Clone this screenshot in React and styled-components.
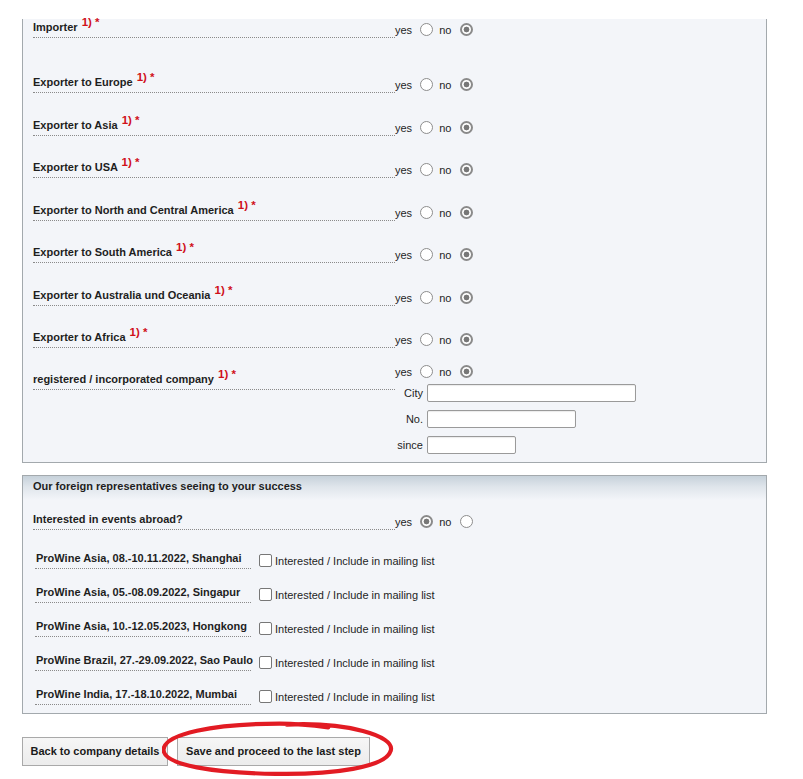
import styled, { createGlobalStyle } from "styled-components";

const GlobalStyle = createGlobalStyle`
  html, body {
    margin: 0;
    padding: 0;
    background: #ffffff;
  }
  body {
    font-family: "Liberation Sans", Arial, sans-serif;
    font-size: 11px;
    color: #1e1e1e;
  }
`;

const Page = styled.div`
  width: 745px;
  padding: 19px 0 0 22px;
`;

const Panel = styled.div`
  background: #f3f5f9;
  border: 1px solid #a3a9ad;
  border-top: ${(p) => (p.$open ? "none" : "1px solid #a3a9ad")};
  padding: ${(p) => (p.$open ? "1px" : "0")} 10px 8px 10px;
  margin-bottom: ${(p) => p.$mb || 0}px;
`;

const PanelHeader = styled.div`
  margin: 0 -10px;
  height: 24px;
  padding: 4px 10px 0;
  box-sizing: border-box;
  line-height: 13px;
  font-weight: bold;
  background: linear-gradient(#c6d1da 0%, #dfe5eb 45%, #f3f5f9 100%);
`;

const Row = styled.div`
  display: flex;
  align-items: ${(p) => (p.$top ? "flex-start" : "flex-end")};
  margin-top: ${(p) => p.$mt ?? 24.5}px;
`;

const Label = styled.div`
  width: 362px;
  box-sizing: border-box;
  line-height: 14px;
  padding-bottom: 3px;
  border-bottom: 1px dotted #8a8a8a;
  font-weight: bold;
  white-space: nowrap;
  margin-top: ${(p) => p.$mt || 0}px;
`;

const Req = styled.span`
  color: #d0101a;
  font-weight: bold;
  font-size: 11.5px;
  vertical-align: 5px;
  line-height: 0;
  margin-left: 1px;
`;

const Choices = styled.div`
  white-space: nowrap;
  line-height: 14px;
  margin-bottom: 1px;
`;

const Radio = styled.input.attrs({ type: "radio" })`
  appearance: none;
  width: 13px;
  height: 13px;
  margin: 3px 3px 0 5px;
  box-sizing: border-box;
  border-radius: 50%;
  border: 1px solid #8d8d8d;
  background: #ffffff;
  vertical-align: -2px;
  &:checked {
    border: 2px solid #8a8a8a;
    background: radial-gradient(circle, #777777 0 2.6px, #ffffff 3.2px);
  }
`;

const Side = styled.div`
  display: flex;
  flex-direction: column;
`;

const Fields = styled.div`
  display: grid;
  grid-template-columns: 28px auto;
  column-gap: 4px;
  row-gap: 8px;
  margin-top: 4px;
  align-items: center;
`;

const FieldLabel = styled.span`
  text-align: right;
  line-height: 14px;
`;

const TextInput = styled.input.attrs({ type: "text" })`
  width: ${(p) => p.$w}px;
  height: 18px;
  box-sizing: border-box;
  border: 1px solid #9a9a9a;
  border-radius: 2px;
  background: #ffffff;
  box-shadow: inset 0 1px 1px rgba(0, 0, 0, 0.08);
  margin: 0;
  padding: 0 3px;
  font: inherit;
`;

const Events = styled.div`
  margin-left: 2px;
  margin-top: 21px;
  display: flex;
  flex-direction: column;
  gap: 16px;
`;

const EventRow = styled.div`
  display: flex;
  align-items: flex-end;
`;

const EventName = styled.div`
  width: 216px;
  box-sizing: border-box;
  padding: 0 0 3px 1px;
  line-height: 14px;
  border-bottom: 1px dotted #8a8a8a;
  font-weight: bold;
  white-space: nowrap;
`;

const Check = styled.label`
  white-space: nowrap;
  line-height: 14px;
  margin-bottom: 1px;
`;

const Box = styled.input.attrs({ type: "checkbox" })`
  appearance: none;
  width: 13px;
  height: 13px;
  margin: 0 3px 0 8px;
  box-sizing: border-box;
  border: 1px solid #777777;
  border-radius: 2px;
  background: #ffffff;
  vertical-align: -2px;
`;

const Actions = styled.div`
  position: relative;
  display: flex;
  gap: 9px;
  margin-top: 23px;
  padding-bottom: 14px;
`;

const Button = styled.button`
  width: ${(p) => p.$w}px;
  height: 29px;
  box-sizing: border-box;
  border: 1px solid #a9a9a9;
  background: linear-gradient(#f6f6f6, #ececec);
  font-family: "Liberation Sans", Arial, sans-serif;
  font-size: 11px;
  font-weight: bold;
  color: #1a1a1a;
  padding: 0;
  cursor: pointer;
`;

const Circle = styled.svg`
  position: absolute;
  left: 140px;
  top: -19px;
  pointer-events: none;
`;

const YesNo = ({ yes }) => (
  <Choices>
    yes <Radio checked={!!yes} readOnly /> no <Radio checked={!yes} readOnly />
  </Choices>
);

const exporters = [
  "Exporter to Europe",
  "Exporter to Asia",
  "Exporter to USA",
  "Exporter to North and Central America",
  "Exporter to South America",
  "Exporter to Australia und Oceania",
  "Exporter to Africa",
];

const events = [
  "ProWine Asia, 08.-10.11.2022, Shanghai",
  "ProWine Asia, 05.-08.09.2022, Singapur",
  "ProWine Asia, 10.-12.05.2023, Hongkong",
  "ProWine Brazil, 27.-29.09.2022, Sao Paulo",
  "ProWine India, 17.-18.10.2022, Mumbai",
];

export default function App() {
  return (
    <>
      <GlobalStyle />
      <Page>
        <Panel $open $mb={12}>
          <Row $mt={0}>
            <Label>
              Importer <Req>1) *</Req>
            </Label>
            <YesNo />
          </Row>
          <Row $mt={37}>
            <Label>
              {exporters[0]} <Req>1) *</Req>
            </Label>
            <YesNo />
          </Row>
          {exporters.slice(1).map((e) => (
            <Row key={e}>
              <Label>
                {e} <Req>1) *</Req>
              </Label>
              <YesNo />
            </Row>
          ))}
          <Row $top $mt={13.5}>
            <Label $mt={10.5}>
              registered / incorporated company <Req>1) *</Req>
            </Label>
            <Side>
              <YesNo />
              <Fields>
                <FieldLabel>City</FieldLabel>
                <TextInput $w={209} />
                <FieldLabel>No.</FieldLabel>
                <TextInput $w={149} />
                <FieldLabel>since</FieldLabel>
                <TextInput $w={89} />
              </Fields>
            </Side>
          </Row>
        </Panel>

        <Panel>
          <PanelHeader>Our foreign representatives seeing to your success</PanelHeader>
          <Row $mt={12}>
            <Label>Interested in events abroad?</Label>
            <YesNo yes />
          </Row>
          <Events>
            {events.map((e) => (
              <EventRow key={e}>
                <EventName>{e}</EventName>
                <Check>
                  <Box />
                  Interested / Include in mailing list
                </Check>
              </EventRow>
            ))}
          </Events>
        </Panel>

        <Actions>
          <Button $w={146}>Back to company details</Button>
          <Button $w={193}>Save and proceed to the last step</Button>
          <Circle width="250" height="64" viewBox="0 0 250 64">
            <path
              d="M140 6 C 205 3, 258 18, 253 34 C 248 52, 190 60, 128 59 C 62 58, 6 50, 6 33 C 7 16, 60 5, 132 5 C 150 5, 170 7, 185 9"
              fill="none"
              stroke="#e21b23"
              strokeWidth="4.5"
              strokeLinecap="round"
              transform="translate(-4 1) scale(0.92 0.93)"
            />
          </Circle>
        </Actions>
      </Page>
    </>
  );
}
